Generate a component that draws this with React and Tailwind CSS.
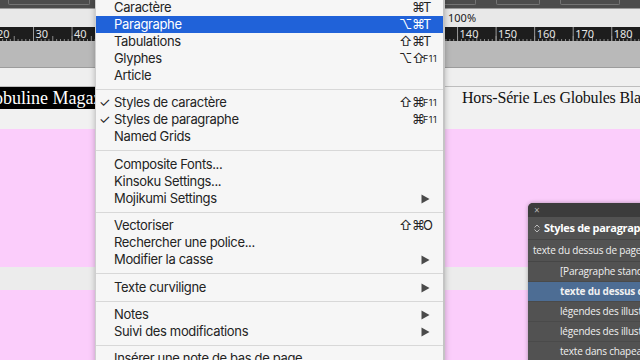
import React from "react";

const RULER_START = 20;
const PX_PER_UNIT = 3.855;
const tickX = (n) => 33 + (n - 30) * PX_PER_UNIT;

const Ruler = () => {
  const majors = [];
  for (let n = 20; n <= 190; n += 10) majors.push(n);
  const minors = [];
  for (let n = RULER_START; n <= 190; n += 1) minors.push(n);
  return (
    <svg width="640" height="14" className="block">
      <rect width="640" height="14" fill="#1d1d1d" />
      {minors.map((n) => (
        <line
          key={n}
          x1={tickX(n) + 0.5}
          x2={tickX(n) + 0.5}
          y1={n % 5 === 0 ? 9 : 12}
          y2={14}
          stroke="#8a8a8a"
          strokeWidth="1"
        />
      ))}
      {majors.map((n) => (
        <g key={"m" + n}>
          <line x1={tickX(n) + 0.5} x2={tickX(n) + 0.5} y1="0" y2="14" stroke="#9a9a9a" strokeWidth="1" />
          <text x={tickX(n) + 2.5} y="10.5" fontSize="11" fill="#e4e4e4" fontFamily="'Noto Sans', sans-serif">
            {n}
          </text>
        </g>
      ))}
    </svg>
  );
};

const Arrow = () => (
  <svg width="9" height="10" viewBox="0 0 9 10" className="ml-auto mr-[13px]">
    <path d="M0.5 0.5 L8.5 5 L0.5 9.5 Z" fill="#4a4a4a" />
  </svg>
);

const Shortcut = ({ a, b, k, small }) => (
  <div className="ml-auto w-[44px] flex items-center tracking-normal">
    <span className="w-[13px] text-[13px]">{a}</span>
    <span className="w-[11px] text-[13px]">{b}</span>
    <span className={small ? "text-[9px] tracking-[0.5px]" : "text-[13px]"}>{k}</span>
  </div>
);

const menu = [
  { label: "Caractère", sc: { b: "⌘", k: "T" } },
  { label: "Paragraphe", sc: { a: "⌥", b: "⌘", k: "T" }, active: true },
  { label: "Tabulations", sc: { a: "⇧", b: "⌘", k: "T" } },
  { label: "Glyphes", sc: { a: "⌥", b: "⇧", k: "F11", small: true } },
  { label: "Article" },
  { sep: 10 },
  { label: "Styles de caractère", check: true, sc: { a: "⇧", b: "⌘", k: "F11", small: true } },
  { label: "Styles de paragraphe", check: true, sc: { b: "⌘", k: "F11", small: true } },
  { label: "Named Grids" },
  { sep: 11 },
  { label: "Composite Fonts..." },
  { label: "Kinsoku Settings..." },
  { label: "Mojikumi Settings", sub: true },
  { sep: 10 },
  { label: "Vectoriser", sc: { a: "⇧", b: "⌘", k: "O" } },
  { label: "Rechercher une police..." },
  { label: "Modifier la casse", sub: true },
  { sep: 11 },
  { label: "Texte curviligne", sub: true },
  { sep: 10 },
  { label: "Notes", sub: true },
  { label: "Suivi des modifications", sub: true },
  { sep: 10 },
  { label: "Insérer une note de bas de page" },
];

const MenuRow = ({ item }) => {
  if (item.sep) {
    return (
      <div className={item.sep === 11 ? "h-[11px] flex items-center" : "h-[10px] flex items-center"}>
        <div className="h-px w-full bg-[#d8d8d8]" />
      </div>
    );
  }
  return (
    <div
      className={`h-[17px] flex items-center ${
        item.active ? "bg-[#2062d9] text-white" : "text-[#232323]"
      }`}
    >
      <span className="w-[18px] shrink-0 pl-[3px] text-[13px] leading-none">{item.check ? "✓" : ""}</span>
      <span className="text-[13px] leading-none whitespace-nowrap tracking-[-0.35px]">{item.label}</span>
      {item.sc && <Shortcut {...item.sc} />}
      {item.sub && <Arrow />}
    </div>
  );
};

const panelRows = [
  { label: "[Paragraphe standard]" },
  { label: "texte du dessus de page", active: true },
  { label: "légendes des illustrations" },
  { label: "légendes des illustrations 2" },
  { label: "texte dans chapeau" },
];

export default function App() {
  return (
    <div
      className="w-[640px] h-[360px] relative overflow-hidden bg-[#fbcdfb]"
      style={{ fontFamily: "Inter, 'DejaVu Sans', sans-serif" }}
    >
      {/* app chrome */}
      <div className="h-[8px] bg-[#4c4c4c] flex gap-[20px] px-[8px]">
        <div className="w-[82px] h-[5px] border border-t-0 border-[#747474] rounded-b-[2px]" />
        <div className="ml-[330px] w-[36px] h-[5px] border border-t-0 border-[#747474] rounded-b-[2px]" />
        <div className="w-[44px] h-[5px] border border-t-0 border-[#747474] rounded-b-[2px]" />
        <div className="w-[60px] h-[5px] border border-t-0 border-[#747474] rounded-b-[2px]" />
      </div>
      <div className="h-[19px] bg-[#e8e8e8] flex items-center border-t border-[#9a9a9a]">
        <span className="ml-[448px] text-[11px] text-[#1a1a1a]" style={{ fontFamily: "'Noto Sans', sans-serif" }}>
          100%
        </span>
      </div>
      <Ruler />
      <div className="h-[27px] bg-[#b9b9b9] border-b border-[#9c9c9c]" />

      {/* page top */}
      <div className="h-[19px] bg-[#efefef] border-b border-[#bdbdbd]" />
      <div className="h-[42px] bg-[#f1f1f1] flex items-start">
        <div className="w-[120px] shrink-0 h-[22px] bg-black overflow-hidden flex items-center">
          <span
            className="ml-[-24px] text-[18px] text-white whitespace-nowrap leading-none"
            style={{ fontFamily: "'Liberation Serif', serif" }}
          >
            Globuline Magazine
          </span>
        </div>
        <span
          className="ml-[342px] mt-[1px] text-[16px] leading-[20px] text-[#111] whitespace-nowrap tracking-[-0.2px]"
          style={{ fontFamily: "'Liberation Serif', serif" }}
        >
          Hors-Série Les Globules Blancs
        </span>
      </div>

      {/* pink page area */}
      <div className="h-[138px]" />
      <div className="h-[23px] bg-[#ececec]" />

      {/* menu */}
      <div className="absolute left-[95px] top-[-1px] w-[350px] bg-[#f6f6f6] border-l border-[#cfcfcf] border-r-2 border-r-[#c4c4c4] shadow-[0_0_6px_rgba(0,0,0,0.25)]">
        {menu.map((item, i) => (
          <MenuRow key={i} item={item} />
        ))}
      </div>

      {/* paragraph styles panel */}
      <div
        className="absolute left-[528px] top-[203px] w-[130px] h-[170px] bg-[#525252] rounded-tl-[5px] overflow-hidden text-white shadow-[0_0_4px_rgba(0,0,0,0.3)]"
        style={{ fontFamily: "'Open Sans', 'DejaVu Sans', sans-serif" }}
      >
        <div className="h-[14px] bg-[#3c3c3c] flex items-center pl-[6px]">
          <span className="text-[10px] leading-none text-[#b5b5b5]">×</span>
        </div>
        <div className="h-[23px] flex items-center pl-[6px] border-b border-[#464646]">
          <svg width="6" height="9" viewBox="0 0 6 9" className="mr-[4px]">
            <path d="M0.5 3.5 L3 1 L5.5 3.5 M0.5 5.5 L3 8 L5.5 5.5" stroke="#bdbdbd" strokeWidth="1" fill="none" />
          </svg>
          <span className="text-[11px] font-bold whitespace-nowrap tracking-[-0.3px]">Styles de paragraphe</span>
        </div>
        <div className="h-[22px] flex items-center pl-[5px] border-b border-[#464646]">
          <span className="text-[10px] whitespace-nowrap text-[#efefef] tracking-[-0.2px]">texte du dessus de page</span>
        </div>
        {panelRows.map((r) => (
          <div
            key={r.label}
            className={`h-[20px] flex items-center pl-[32px] border-b border-[#4a4a4a] ${
              r.active ? "bg-[#4d6d94] font-bold" : ""
            }`}
          >
            <span className="text-[10px] whitespace-nowrap text-[#f0f0f0] tracking-[-0.2px]">{r.label}</span>
          </div>
        ))}
      </div>
    </div>
  );
}
